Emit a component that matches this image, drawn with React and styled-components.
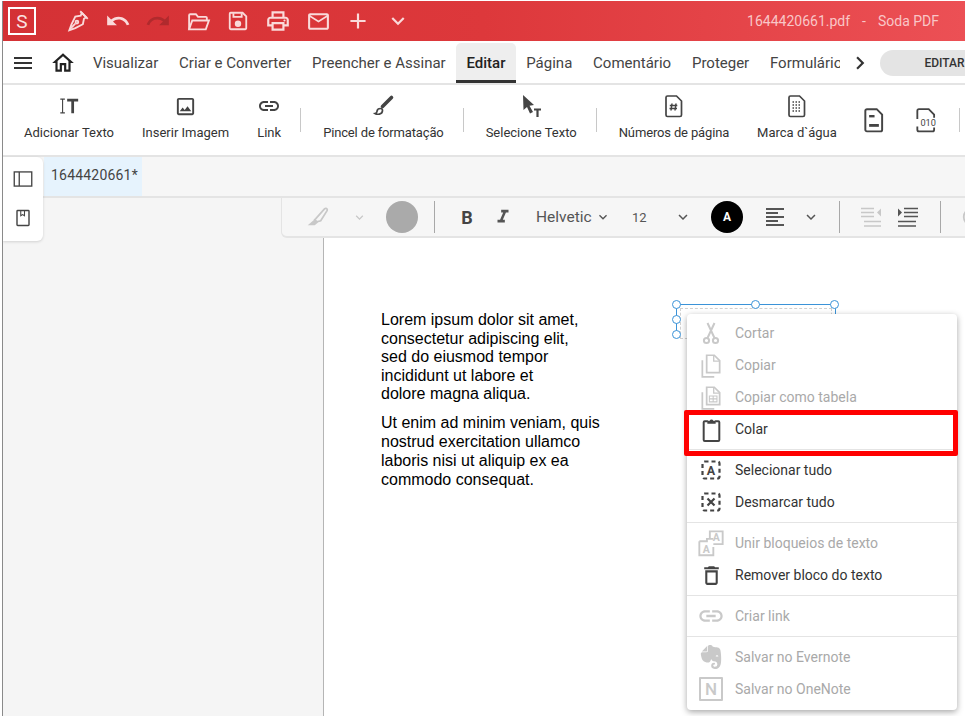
import styled, { createGlobalStyle } from 'styled-components';
import {
  MdMenu, MdOutlineHome, MdUndo, MdRedo, MdOutlinePrint, MdMailOutline, MdAdd,
  MdKeyboardArrowDown, MdKeyboardArrowRight, MdOutlineImage, MdLink, MdFormatAlignLeft,
  MdFormatItalic, MdOutlineDelete,
} from 'react-icons/md';
import { SiEvernote } from 'react-icons/si';

const GlobalStyle = createGlobalStyle`
  html, body {
    margin: 0;
    height: 100%;
    overflow: hidden;
    background: #fff;
    font-family: Roboto, "Liberation Sans", sans-serif;
  }
`;

function Glyph({ size = 24, children, ...rest }) {
  return (
    <svg width={size} height={size} viewBox="0 0 24 24" fill="none" stroke="currentColor" strokeWidth="2" {...rest}>
      {children}
    </svg>
  );
}

const NibIcon = () => (
  <Glyph size={26} strokeWidth="1.7">
    <path d="M15.5 4.5l4 4-2 1.5-1 5-7 3.5-5.5 2 2-5.5 3.5-7 5-1z" />
    <path d="M14 3l7 7M4.5 19.5l5-5" />
    <circle cx="11" cy="13" r="1.3" />
  </Glyph>
);

const OpenFolderIcon = () => (
  <Glyph size={25} strokeWidth="1.8">
    <path d="M3 19.5V6a1 1 0 0 1 1-1h5.5l2 2.5H19a1 1 0 0 1 1 1V11" />
    <path d="M3 19.5h16l3-8.5H6z" />
  </Glyph>
);

const SaveIcon = () => (
  <Glyph size={22}>
    <path d="M4 3h13l4 4v13a1 1 0 0 1-1 1H4a1 1 0 0 1-1-1V4a1 1 0 0 1 1-1z" />
    <path d="M7 3.5v4h9v-4" />
    <circle cx="12" cy="15" r="2.5" fill="currentColor" />
  </Glyph>
);

const AddTextIcon = () => (
  <Glyph size={22}>
    <path d="M5 5v14M2.5 4.5h5M2.5 19.5h5" strokeWidth="1.2" />
    <path d="M10 5.5h12M16 5.5V20" strokeWidth="3" />
  </Glyph>
);

const BrushIcon = () => (
  <Glyph size={24}>
    <path d="M20.5 3.5L11.5 12.5" strokeWidth="3.6" strokeLinecap="round" />
    <path d="M9.5 14.5c-2 0-3.5 1.2-3.5 3 0 1-1 1.8-2 2 1.8 1.2 7.5 1.3 7.5-3 0-.8-.8-2-2-2z" strokeWidth="1.7" />
  </Glyph>
);

const CursorTextIcon = () => (
  <Glyph size={24}>
    <path d="M4 1l11 10-4.5.8L14 18l-3 1.5-3-6.5L4.5 16z" fill="currentColor" stroke="none" />
    <path d="M15 15.5h7M18.5 15.5V23" strokeWidth="2.2" />
  </Glyph>
);

const FilePath = 'M5.5 2h9l5 5v14a1.5 1.5 0 0 1-1.5 1.5H5.5A1.5 1.5 0 0 1 4 21V3.5A1.5 1.5 0 0 1 5.5 2z';

const PageNumberIcon = () => (
  <Glyph size={26} strokeWidth="1.7">
    <path d={FilePath} />
    <path d="M10 9.5l-1 7M14 9.5l-1 7M7.8 11.5h7.5M7.5 14.5h7.5" strokeWidth="1.5" />
  </Glyph>
);

const WatermarkIcon = () => (
  <Glyph size={26} strokeWidth="1.7">
    <path d={FilePath} />
    <path d="M7.5 8h9M7.5 11h9M7.5 14h9M7.5 17h9" strokeWidth="1.5" strokeDasharray="1.5 1.5" />
  </Glyph>
);

const HeaderFileIcon = () => (
  <Glyph size={26} strokeWidth="1.8">
    <path d={FilePath} />
    <path d="M7.5 8.5h5" strokeWidth="2.2" />
    <path d="M7.5 17h9" strokeWidth="2.6" />
  </Glyph>
);

const BinaryFileIcon = () => (
  <Glyph size={26} strokeWidth="1.7">
    <path d="M4 11V3.5A1.5 1.5 0 0 1 5.5 2h9l5 5v3M19.5 19v2a1.5 1.5 0 0 1-1.5 1.5H5.5A1.5 1.5 0 0 1 4 21v-3" />
    <text x="14" y="17.5" fontFamily="Roboto" fontSize="8.5" fill="currentColor" stroke="none" textAnchor="middle">010</text>
  </Glyph>
);

const PanelIcon = () => (
  <Glyph size={20} strokeWidth="1.6">
    <rect x="1.5" y="3.5" width="21" height="17" />
    <path d="M7.5 3.5v17" />
  </Glyph>
);

const BookmarkIcon = () => (
  <Glyph size={18} strokeWidth="1.9">
    <rect x="4" y="2" width="16" height="20" rx="1" />
    <path d="M9 2v7l2.5-1.5L14 9V2" strokeWidth="1.4" />
  </Glyph>
);

const HighlighterIcon = () => (
  <Glyph size={26} strokeWidth="1.6">
    <path d="M10 13.5l8-9c1.2-1.2 3-.2 2.5 1.5l-6 9.5-3.5 1-2-2z" />
    <path d="M9 14l3 3-3 2.5H2.5z" fill="currentColor" stroke="none" />
  </Glyph>
);

const IndentIcon = ({ outdent }) => (
  <Glyph size={24} strokeWidth="1.7">
    {outdent ? (
      <>
        <path d="M2 3.5h13M2 7.5h13M2 11.5h13M5 16.5h17M5 21h17" />
        <path d="M22 3.5L18 7.5l4 4z" fill="currentColor" stroke="none" />
      </>
    ) : (
      <>
        <path d="M8 3.5h14M8 7.5h14M8 11.5h14M2 16.5h18M2 21h18" />
        <path d="M2 3.5L6 7.5l-4 4z" fill="currentColor" stroke="none" />
      </>
    )}
  </Glyph>
);

const ScissorsIcon = () => (
  <Glyph size={24} strokeWidth="2">
    <circle cx="7.5" cy="19.5" r="2.6" />
    <circle cx="16.5" cy="19.5" r="2.6" />
    <path d="M8.5 17L15.5 2M15.5 17L8.5 2" />
  </Glyph>
);

const CopyIcon = ({ table }) => (
  <Glyph size={26} strokeWidth="1.6">
    <path d="M8 3h7l5 5v11H8z" />
    <path d="M14.5 3v5.5H20" strokeWidth="1.2" />
    <path d="M4 7.5V23h11" />
    {table && <path d="M10.5 11h7v5.5h-7zM10.5 13.7h7M14 11v5.5" strokeWidth="1" />}
  </Glyph>
);

const ClipboardIcon = () => (
  <Glyph size={25} strokeWidth="1.9">
    <path d="M8.5 4H5.5a1 1 0 0 0-1 1v17a1 1 0 0 0 1 1h13a1 1 0 0 0 1-1V5a1 1 0 0 0-1-1h-3" />
    <path d="M8 6.5V3.5h2.3a1.8 1.8 0 0 1 3.4 0H16v3z" fill="currentColor" stroke="none" />
  </Glyph>
);

const DashedBoxIcon = ({ children }) => (
  <Glyph size={24}>
    <rect x="3.5" y="3.5" width="17" height="17" rx="2" strokeDasharray="4 3" strokeWidth="2.2" />
    {children}
  </Glyph>
);

const MergeIcon = () => (
  <Glyph size={28} strokeWidth="1.6">
    <path d="M2 10.5h6.5V8.5H14M14 15.5v7H2v-12" />
    <path d="M11 8.5V2h11v11h-8" />
    <text x="16.5" y="10.5" fontFamily="Roboto" fontWeight="700" fontSize="9" fill="currentColor" stroke="none" textAnchor="middle">A</text>
    <text x="8" y="20.5" fontFamily="Roboto" fontWeight="700" fontSize="9" fill="currentColor" stroke="none" textAnchor="middle">A</text>
  </Glyph>
);

const OneNoteBox = styled.div`
  width: 20px;
  height: 20px;
  border: 2px solid #c9c9c9;
  border-radius: 1px;
  display: flex;
  align-items: center;
  justify-content: center;
  color: #c9c9c9;
  font-size: 17px;
  font-weight: 500;
`;

const tabs = ['Visualizar', 'Criar e Converter', 'Preencher e Assinar', 'Editar', 'Página', 'Comentário', 'Proteger', 'Formulário'];

const menu = [
  [
    { label: 'Cortar', icon: <ScissorsIcon />, off: true },
    { label: 'Copiar', icon: <CopyIcon />, off: true },
    { label: 'Copiar como tabela', icon: <CopyIcon table />, off: true },
    { label: 'Colar', icon: <ClipboardIcon /> },
  ],
  [
    {
      label: 'Selecionar tudo',
      icon: (
        <DashedBoxIcon>
          <text x="12" y="16.5" fontFamily="Roboto" fontWeight="700" fontSize="12.5" fill="currentColor" stroke="none" textAnchor="middle">A</text>
        </DashedBoxIcon>
      ),
    },
    {
      label: 'Desmarcar tudo',
      icon: (
        <DashedBoxIcon>
          <path d="M8.5 8.5l7 7M15.5 8.5l-7 7" strokeWidth="2.2" />
        </DashedBoxIcon>
      ),
    },
  ],
  [
    { label: 'Unir bloqueios de texto', icon: <MergeIcon />, off: true },
    { label: 'Remover bloco do texto', icon: <MdOutlineDelete size={25} /> },
  ],
  [{ label: 'Criar link', icon: <MdLink size={28} />, off: true }],
  [
    { label: 'Salvar no Evernote', icon: <SiEvernote size={24} />, off: true },
    { label: 'Salvar no OneNote', icon: <OneNoteBox>N</OneNoteBox>, off: true },
  ],
];

export default function App() {
  return (
    <>
      <GlobalStyle />
      <Frame>
        <TitleBar>
          <Logo>S</Logo>
          <QuickActions>
            <QuickButton><NibIcon /></QuickButton>
            <QuickButton><MdUndo size={26} /></QuickButton>
            <QuickButton $dim><MdRedo size={26} /></QuickButton>
            <QuickButton><OpenFolderIcon /></QuickButton>
            <QuickButton><SaveIcon /></QuickButton>
            <QuickButton><MdOutlinePrint size={26} /></QuickButton>
            <QuickButton><MdMailOutline size={25} /></QuickButton>
            <QuickButton><MdAdd size={26} /></QuickButton>
            <QuickButton><MdKeyboardArrowDown size={26} /></QuickButton>
          </QuickActions>
          <DocTitle>
            <span>1644420661.pdf</span>
            <span>-</span>
            <span>Soda PDF</span>
          </DocTitle>
        </TitleBar>

        <TabsRow>
          <Burger><MdMenu size={24} /></Burger>
          <HomeButton><MdOutlineHome size={26} /></HomeButton>
          <Tabs>
            {tabs.map(t => <Tab key={t} $active={t === 'Editar'}>{t}</Tab>)}
          </Tabs>
          <MoreTabs><MdKeyboardArrowRight size={26} /></MoreTabs>
          <ModePill>EDITAR</ModePill>
        </TabsRow>

        <Ribbon>
          <RibbonItem><RibbonIcon><AddTextIcon /></RibbonIcon><span>Adicionar Texto</span></RibbonItem>
          <RibbonItem><RibbonIcon><MdOutlineImage size={23} /></RibbonIcon><span>Inserir Imagem</span></RibbonItem>
          <RibbonItem><RibbonIcon><MdLink size={28} /></RibbonIcon><span>Link</span></RibbonItem>
          <RibbonSep />
          <RibbonItem $tight><RibbonIcon><BrushIcon /></RibbonIcon><span>Pincel de formatação</span></RibbonItem>
          <RibbonSep />
          <RibbonItem><RibbonIcon><CursorTextIcon /></RibbonIcon><span>Selecione Texto</span></RibbonItem>
          <RibbonSep />
          <RibbonItem $tight><RibbonIcon><PageNumberIcon /></RibbonIcon><span>Números de página</span></RibbonItem>
          <RibbonItem><RibbonIcon><WatermarkIcon /></RibbonIcon><span>Marca d`água</span></RibbonItem>
          <RibbonIconOnly $l={-4} $r={-1}><HeaderFileIcon /></RibbonIconOnly>
          <RibbonIconOnly $l={-1} $r={1}><BinaryFileIcon /></RibbonIconOnly>
          <RibbonSep />
        </Ribbon>

        <DocTabs>
          <DocTab>1644420661*</DocTab>
        </DocTabs>

        <Workspace>
          <SideDock>
            <DockButton><PanelIcon /></DockButton>
            <DockButton><BookmarkIcon /></DockButton>
          </SideDock>

          <FormatBar>
            <FormatSlot $w={32} $muted><HighlighterIcon /></FormatSlot>
            <FormatSlot $w={18} $gap={16} $muted><MdKeyboardArrowDown size={15} /></FormatSlot>
            <ColorDot $bg="#aaaaaa" $gap={18} />
            <FormatSep $gap={16} />
            <FormatSlot $w={22} $gap={21}><BoldMark>B</BoldMark></FormatSlot>
            <FormatSlot $w={22} $gap={14}><MdFormatItalic size={24} /></FormatSlot>
            <FontName>Helvetic</FontName>
            <FormatSlot $w={16} $gap={2}><MdKeyboardArrowDown size={16} /></FormatSlot>
            <FontSize>12</FontSize>
            <FormatSlot $w={18} $gap={26}><MdKeyboardArrowDown size={18} /></FormatSlot>
            <ColorDot $bg="#000000" $gap={19}>A</ColorDot>
            <FormatSlot $w={24} $gap={20}><MdFormatAlignLeft size={24} /></FormatSlot>
            <FormatSlot $w={18} $gap={15}><MdKeyboardArrowDown size={18} /></FormatSlot>
            <FormatSep $gap={19} />
            <FormatSlot $w={24} $gap={19} $muted><IndentIcon outdent /></FormatSlot>
            <FormatSlot $w={24} $gap={13}><IndentIcon /></FormatSlot>
            <FormatSep $gap={20} />
            <FormatSlot $w={22} $gap={20} $muted>
              <Glyph size={22} strokeWidth="2"><circle cx="12" cy="12" r="9" /></Glyph>
            </FormatSlot>
          </FormatBar>

          <Gutter />
          <DocPage>
            <Para $lh={18.5}>
              Lorem ipsum dolor sit amet,<br />
              consectetur adipiscing elit,<br />
              sed do eiusmod tempor<br />
              incididunt ut labore et<br />
              dolore magna aliqua.
            </Para>
            <Para $lh={19.3}>
              Ut enim ad minim veniam, quis<br />
              nostrud exercitation ullamco<br />
              laboris nisi ut aliquip ex ea<br />
              commodo consequat.
            </Para>

            <Selection>
              <Handle $x={0} $y={0} />
              <Handle $x={50} $y={0} />
              <Handle $x={100} $y={0} />
              <Handle $x={0} $y={50} />
              <Handle $x={0} $y={100} />
            </Selection>
          </DocPage>

          <ContextMenu>
            <Highlight />
            {menu.map((group, i) => (
              <MenuGroup key={i}>
                {group.map(item => (
                  <MenuItem key={item.label} $off={item.off}>
                    <MenuIcon>{item.icon}</MenuIcon>
                    <span>{item.label}</span>
                  </MenuItem>
                ))}
              </MenuGroup>
            ))}
          </ContextMenu>
        </Workspace>
      </Frame>
    </>
  );
}

const Frame = styled.div`
  height: 715px;
  margin-top: 1px;
  margin-left: 2px;
  border-left: 1px solid #8a8a8a;
  display: flex;
  flex-direction: column;
  overflow: hidden;
  position: relative;
`;

const TitleBar = styled.div`
  height: 40px;
  flex: none;
  margin-left: -1px;
  display: flex;
  align-items: center;
  padding-left: 6px;
  background: linear-gradient(90deg, #d43135 0%, #dd383b 50%, #ec5055 100%);
`;

const Logo = styled.div`
  width: 24px;
  height: 24px;
  border: 2px solid #fff;
  display: flex;
  align-items: center;
  justify-content: center;
  color: #fbe3e3;
  font-size: 19px;
  line-height: 1;
`;

const QuickActions = styled.div`
  display: flex;
  align-items: center;
  margin-left: 22px;
`;

const QuickButton = styled.div`
  width: 40px;
  height: 40px;
  display: flex;
  align-items: center;
  justify-content: center;
  color: ${p => (p.$dim ? '#b02a2d' : '#fadada')};
`;

const DocTitle = styled.div`
  margin-left: auto;
  padding-right: 26px;
  display: flex;
  gap: 12px;
  color: #f9c6c7;
  font-size: 14px;
`;

const TabsRow = styled.div`
  height: 44px;
  flex: none;
  box-sizing: border-box;
  border-bottom: 2px solid #e4e4e4;
  display: flex;
  align-items: flex-end;
  background: #fff;
  overflow: hidden;
`;

const Burger = styled.div`
  width: 24px;
  height: 40px;
  margin-left: 8px;
  display: flex;
  align-items: center;
  color: #333;
`;

const HomeButton = styled.div`
  width: 26px;
  height: 40px;
  margin-left: 15px;
  display: flex;
  align-items: center;
  color: #222;
`;

const Tabs = styled.div`
  width: 757px;
  flex: none;
  margin-left: 6.5px;
  display: flex;
  overflow: hidden;
`;

const Tab = styled.div`
  flex: none;
  box-sizing: border-box;
  height: 40px;
  padding: 2px 10.4px 0;
  display: flex;
  align-items: center;
  font-size: 15px;
  white-space: nowrap;
  color: ${p => (p.$active ? '#222' : '#444')};
  font-weight: ${p => (p.$active ? 500 : 400)};
  background: ${p => (p.$active ? '#eeeeee' : 'transparent')};
  border-bottom: 3px solid ${p => (p.$active ? '#333' : 'transparent')};
  border-radius: 5px 5px 0 0;
`;

const MoreTabs = styled.div`
  width: 26px;
  height: 40px;
  margin-left: 7px;
  display: flex;
  align-items: center;
  color: #333;
`;

const ModePill = styled.div`
  flex: none;
  width: 130px;
  height: 26px;
  margin: 0 0 7px 7px;
  box-sizing: border-box;
  padding-left: 45px;
  border-radius: 13px;
  background: #e4e4e4;
  display: flex;
  align-items: center;
  font-size: 12px;
  font-weight: 500;
  color: #333;
`;

const Ribbon = styled.div`
  height: 72px;
  flex: none;
  box-sizing: border-box;
  padding: 7px 0 0 21px;
  border-bottom: 2px solid #e4e4e4;
  display: flex;
  gap: 28px;
  background: #fff;
  overflow: hidden;
`;

const RibbonItem = styled.div`
  flex: none;
  height: 49px;
  display: flex;
  flex-direction: column;
  align-items: center;
  justify-content: space-between;
  color: #444;

  span {
    font-size: 13px;
    line-height: 16px;
    letter-spacing: ${p => (p.$tight ? '-0.15px' : '0')};
    color: #333;
    white-space: nowrap;
  }
`;

const RibbonIcon = styled.div`
  width: 24px;
  height: 28px;
  display: flex;
  align-items: center;
  justify-content: center;
`;

const RibbonIconOnly = styled.div`
  flex: none;
  height: 26px;
  margin: 15px ${p => p.$r}px 0 ${p => p.$l}px;
  color: #444;
`;

const RibbonSep = styled.div`
  width: 1px;
  height: 24px;
  flex: none;
  margin: 16px -6px 0 -9px;
  background: #c8c8c8;
`;

const DocTabs = styled.div`
  height: 41px;
  flex: none;
  box-sizing: border-box;
  border-bottom: 2px solid #e4e4e4;
  padding-left: 41px;
  background: #f6f6f6;
  display: flex;
`;

const DocTab = styled.div`
  width: 98px;
  box-sizing: border-box;
  padding: 10px 0 0 7px;
  background: #e6f3fd;
  font-size: 14px;
  letter-spacing: 0.2px;
  color: #444;
`;

const Workspace = styled.div`
  flex: 1;
  display: flex;
  position: relative;
`;

const SideDock = styled.div`
  position: absolute;
  left: 0;
  top: -41px;
  width: 40px;
  height: 84px;
  box-sizing: border-box;
  padding-top: 2px;
  z-index: 3;
  background: #fff;
  border-radius: 0 6px 6px 0;
  box-shadow: 0 1px 3px rgba(0, 0, 0, 0.15);
  display: flex;
  flex-direction: column;
`;

const DockButton = styled.div`
  height: 39px;
  display: flex;
  align-items: center;
  justify-content: center;
  color: #444;
`;

const FormatBar = styled.div`
  position: absolute;
  top: 0;
  left: 278px;
  right: 0;
  height: 40px;
  z-index: 2;
  box-sizing: border-box;
  padding-left: 20px;
  background: #f6f6f6;
  border-left: 1px solid #e4e4e4;
  border-bottom: 2px solid #e4e4e4;
  border-radius: 0 0 0 6px;
  display: flex;
  align-items: center;
  overflow: hidden;
`;

const FormatSlot = styled.div`
  width: ${p => p.$w}px;
  flex: none;
  margin-left: ${p => p.$gap || 0}px;
  display: flex;
  justify-content: center;
  color: ${p => (p.$muted ? '#c8c8c8' : '#555')};
`;

const ColorDot = styled.div`
  width: 32px;
  height: 32px;
  flex: none;
  margin-left: ${p => p.$gap}px;
  border-radius: 50%;
  background: ${p => p.$bg};
  display: flex;
  align-items: center;
  justify-content: center;
  color: #fff;
  font-size: 12px;
  font-weight: 700;
`;

const FormatSep = styled.div`
  width: 1px;
  height: 32px;
  flex: none;
  margin-left: ${p => p.$gap}px;
  background: #a8a8a8;
`;

const BoldMark = styled.span`
  font-size: 18px;
  font-weight: 700;
  color: #444;
`;

const FontName = styled.div`
  width: 57px;
  flex: none;
  overflow: hidden;
  margin-left: 22px;
  font-size: 15.5px;
  white-space: nowrap;
  color: #555;
`;

const FontSize = styled.div`
  width: 16px;
  flex: none;
  margin-left: 21px;
  font-size: 13px;
  color: #555;
`;

const Gutter = styled.div`
  width: 320px;
  flex: none;
  background: #f5f5f5;
  border-right: 1px solid #b5b5b5;
`;

const DocPage = styled.div`
  flex: 1;
  position: relative;
  padding: 113px 0 0 57px;
  background: #fff;
`;

const Para = styled.p`
  margin: 0 0 9.1px;
  font-family: "Liberation Sans", Arial, sans-serif;
  font-size: 16px;
  line-height: ${p => p.$lh}px;
  color: #000;
`;

const Selection = styled.div`
  position: absolute;
  left: 352px;
  top: 106px;
  width: 158px;
  height: 30px;
  border-top: 1px solid #3b93d8;
  border-left: 1px solid #3b93d8;
  border-right: 1px solid #3b93d8;

  &::before {
    content: '';
    position: absolute;
    left: 3px;
    right: 3px;
    top: 3px;
    bottom: -4px;
    border: 1px dashed #d0d0d0;
  }
`;

const Handle = styled.div`
  position: absolute;
  left: ${p => p.$x}%;
  top: ${p => p.$y}%;
  width: 7px;
  height: 7px;
  margin: -5px 0 0 -5px;
  background: #fff;
  border: 1px solid #3b93d8;
  border-radius: 50%;
`;

const ContextMenu = styled.div`
  position: absolute;
  z-index: 4;
  left: 684px;
  top: 116px;
  width: 270px;
  box-sizing: border-box;
  padding: 3px 0 5px;
  background: #fff;
  border-radius: 4px;
  box-shadow: 0 2px 6px rgba(0, 0, 0, 0.35);
`;

const MenuGroup = styled.div`
  padding: 0 0 4px;
  margin-bottom: 4px;
  border-bottom: 1px solid #e4e4e4;

  &:last-child {
    padding-bottom: 0;
    margin-bottom: 0;
    border-bottom: 0;
  }
`;

const MenuItem = styled.div`
  height: 32px;
  display: flex;
  align-items: center;
  gap: 10px;
  padding-left: 10px;
  font-size: 14px;
  color: ${p => (p.$off ? '#a9a9a9' : '#333')};

  svg {
    color: ${p => (p.$off ? '#c9c9c9' : '#444')};
  }
`;

const MenuIcon = styled.div`
  width: 28px;
  display: flex;
  justify-content: center;
`;

const Highlight = styled.div`
  position: absolute;
  left: -3px;
  top: 96px;
  width: 264px;
  height: 36px;
  border: 5px solid #ff0000;
  border-radius: 2px;
  pointer-events: none;
`;
